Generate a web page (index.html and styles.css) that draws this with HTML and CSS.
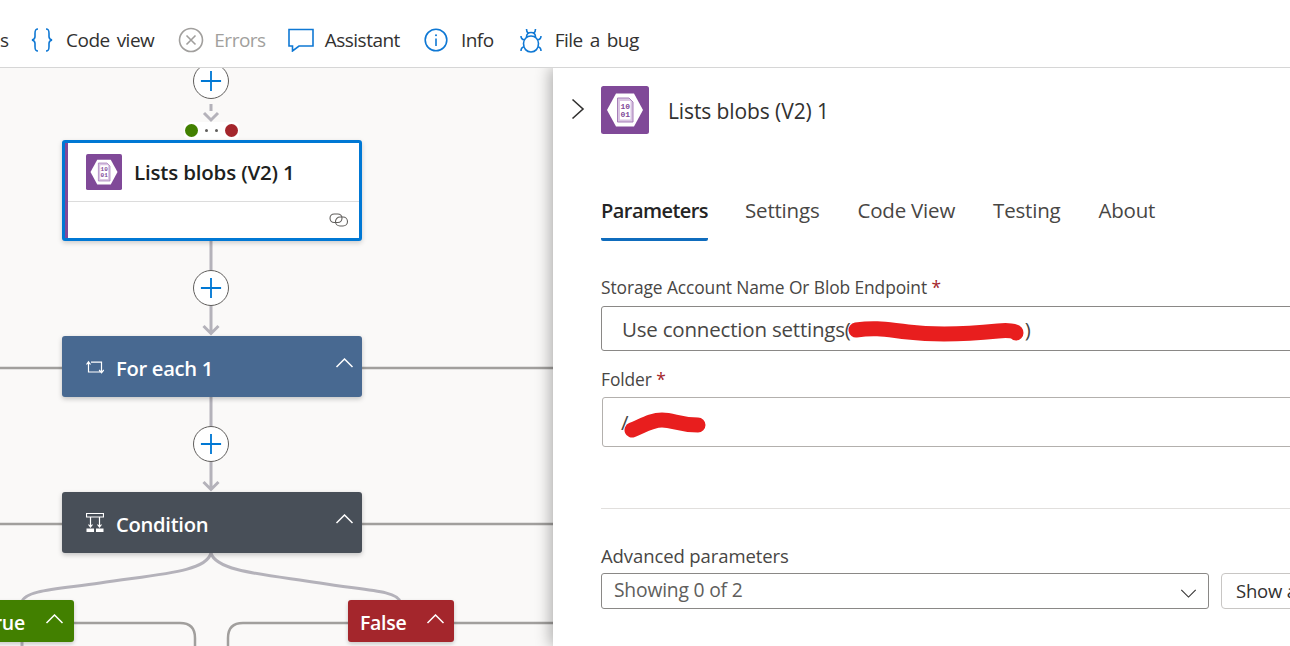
FILE: index.html
```html
<!DOCTYPE html>
<html lang="en">
<head>
<meta charset="utf-8">
<title>Designer</title>
<link rel="stylesheet" href="styles.css">
</head>
<body>
<header class="toolbar">
  <span class="tool-cut">s</span>
  <div class="tool tool-code">
    <svg class="ic ic-braces" viewBox="0 0 22 24"><path d="M7 1C4 1 4 3 4 5.500V8.500C4 10.500 3 11.500 1 12C3 12.500 4 13.500 4 15.500V18.500C4 21 4 23 7 23M15 1C18 1 18 3 18 5.500V8.500C18 10.500 19 11.500 21 12C19 12.500 18 13.500 18 15.500V18.500C18 21 18 23 15 23"/></svg>
    <span>Code view</span>
  </div>
  <div class="tool tool-err">
    <svg class="ic ic-err" viewBox="0 0 26 26"><circle cx="13" cy="13" r="11.500"/><path d="M8.500 8.500L17.500 17.500M17.500 8.500L8.500 17.500"/></svg>
    <span>Errors</span>
  </div>
  <div class="tool tool-chat">
    <svg class="ic ic-chat" viewBox="0 0 26 24"><path d="M1 1.500H25V18H11L4.500 23V18H1Z"/></svg>
    <span>Assistant</span>
  </div>
  <div class="tool tool-info">
    <svg class="ic ic-info" viewBox="0 0 24 24"><circle cx="12" cy="12" r="10.800"/><path d="M12 10.500V18"/><circle class="dot" cx="12" cy="7.300" r="1"/></svg>
    <span>Info</span>
  </div>
  <div class="tool tool-bug">
    <svg class="ic ic-bug" viewBox="0 0 22 25"><path d="M6.500 1C6.500 3 7 4 8 5M15.500 1C15.500 3 15 4 14 5M6.500 9C6.500 6 8.500 4.500 11 4.500C13.500 4.500 15.500 6 15.500 9M11 8C15.500 8 18.500 11.500 18.500 15.500C18.500 20.500 15.500 24 11 24C6.500 24 3.500 20.500 3.500 15.500C3.500 11.500 6.500 8 11 8ZM1 8C1 10 2 11.500 4.500 12M21 8C21 10 20 11.500 17.500 12M1 23C1 20.500 2 19 4.500 18.500M21 23C21 20.500 20 19 17.500 18.500"/></svg>
    <span>File a bug</span>
  </div>
</header>

<main class="workspace">
  <section class="canvas">
    <svg class="wires" viewBox="0 68 553 578">
      <g class="rail">
        <path d="M0 368H62M362 368H553M0 524H62M362 524H553M74 623H180Q195 623 195 638V646M454 623H553M348 623H243Q228 623 228 638V646"/>
      </g>
      <g class="wire">
        <path class="dash" d="M211 104V111"/>
        <path d="M204 113L211 120L218 113"/>
        <path d="M211 241V272M211 305V334M203.500 326L211 333.500L218.500 326"/>
        <path d="M211 397V428M211 461V490M203.500 482L211 489.500L218.500 482"/>
        <path d="M211 553C206 572 160 574 100 583C60 589 24 590 22 602M211 553C216 572 270 575 320 583C360 590 398 590 400 602M22 642V646"/>
      </g>
    </svg>

    <button class="plus plus-a" aria-label="Add"><svg viewBox="0 0 24 24"><path d="M12 1V23M1 12H23"/></svg></button>
    <button class="plus plus-b" aria-label="Add"><svg viewBox="0 0 24 24"><path d="M12 1V23M1 12H23"/></svg></button>
    <button class="plus plus-c" aria-label="Add"><svg viewBox="0 0 24 24"><path d="M12 1V23M1 12H23"/></svg></button>

    <div class="run-after">
      <i class="ra-dot ra-green"></i><i class="ra-pip"></i><i class="ra-pip"></i><i class="ra-dot ra-red"></i>
    </div>

    <article class="card">
      <div class="card-head">
        <svg class="blob blob-sm" viewBox="0 0 48 48"><use href="#blob"/></svg>
        <span class="card-title">Lists blobs (V2) 1</span>
      </div>
      <div class="card-foot">
        <svg class="link" viewBox="0 0 20 14"><rect x="1" y="1" width="12" height="8.500" rx="4.200"/><rect x="6.500" y="4" width="12" height="9" rx="4.500"/></svg>
      </div>
    </article>

    <div class="scope scope-each">
      <svg class="scope-ic" viewBox="0 0 18 14"><path d="M2.500 2V12H15M5 2.200H15.500V11.500M0.500 4.500L2.500 1.800L4.500 4.500M13.200 10L15.500 12.800L17.800 10"/></svg>
      <span class="scope-title">For each 1</span>
      <svg class="caret" viewBox="0 0 18 10"><path d="M1 9L9 1L17 9"/></svg>
    </div>

    <div class="scope scope-cond">
      <svg class="scope-ic" viewBox="0 0 18 20"><path d="M0.500 0.500H17.500V4H0.500ZM4.500 4V14M13.500 4V14M2.500 11.500L4.500 14L6.500 11.500M11.500 11.500L13.500 14L15.500 11.500"/><path class="fill" d="M0.500 15.500H8V19H0.500ZM10 15.500H17.500V19H10Z"/></svg>
      <span class="scope-title">Condition</span>
      <svg class="caret" viewBox="0 0 18 10"><path d="M1 9L9 1L17 9"/></svg>
    </div>

    <div class="branch branch-true">
      <span class="scope-title">True</span>
      <svg class="caret" viewBox="0 0 18 10"><path d="M1 9L9 1L17 9"/></svg>
    </div>
    <div class="branch branch-false">
      <span class="scope-title">False</span>
      <svg class="caret" viewBox="0 0 18 10"><path d="M1 9L9 1L17 9"/></svg>
    </div>
  </section>

  <aside class="panel">
    <div class="panel-head">
      <svg class="panel-toggle" viewBox="0 0 14 22"><path d="M1.500 1.500L12 11L1.500 20.500"/></svg>
      <svg class="blob blob-lg" viewBox="0 0 48 48">
        <defs>
          <g id="blob">
            <rect width="48" height="48" rx="2.500" fill="#804998"/>
            <path d="M15 7.500H33L42 24L33 40.500H15L6 24Z" fill="#fff"/>
            <path d="M16.500 12H28L32 16V36H16.500Z" fill="#d9c4e2" stroke="#a77fb9"/>
            <rect x="19" y="15" width="10.500" height="18.500" fill="#fff"/>
            <text x="24.200" y="22.500" class="bits">10</text>
            <text x="24.200" y="31" class="bits">01</text>
          </g>
        </defs>
        <use href="#blob"/>
      </svg>
      <h2 class="panel-title">Lists blobs (V2) 1</h2>
    </div>

    <nav class="tabs">
      <a class="tab tab-on">Parameters</a>
      <a class="tab">Settings</a>
      <a class="tab">Code View</a>
      <a class="tab">Testing</a>
      <a class="tab">About</a>
    </nav>

    <div class="form">
      <label class="lbl">Storage Account Name Or Blob Endpoint <em>*</em></label>
      <div class="field field-account">
        <span>Use connection settings(<i class="redacted"></i>)</span>
        <svg class="scribble scribble-a" viewBox="0 0 180 26"><path d="M8 12C30 9 40 12 60 14C85 17 120 16 150 13C160 12 168 13 168 15"/></svg>
      </div>
      <label class="lbl lbl-folder">Folder <em>*</em></label>
      <div class="field field-folder">
        <span>/</span>
        <svg class="scribble scribble-b" viewBox="0 0 84 26"><path d="M10 18C22 13 30 8 40 8C52 8 56 13 76 13"/></svg>
      </div>
      <hr class="rule">
      <label class="lbl lbl-adv">Advanced parameters</label>
      <div class="adv-row">
        <div class="dropdown">
          <span>Showing 0 of 2</span>
          <svg class="dd-caret" viewBox="0 0 18 10"><path d="M1 1L9 9L17 1"/></svg>
        </div>
        <button class="show-all">Show all</button>
      </div>
    </div>
  </aside>
</main>
</body>
</html>
```

FILE: styles.css
```css
* { box-sizing: border-box; }

html, body {
  margin: 0;
  height: 646px;
  overflow: hidden;
  background: #fff;
  font-family: "Open Sans", "Liberation Sans", sans-serif;
  color: #323130;
}

/* toolbar */
.toolbar {
  height: 68px;
  padding-top: 13px;
  display: flex;
  align-items: center;
  border-bottom: 1px solid #d6d6d6;
  font-size: 19px;
  letter-spacing: -0.5px;
  word-spacing: 2.5px;
  white-space: nowrap;
  overflow: hidden;
}
.tool-cut { width: 31px; }
.tool { display: flex; align-items: center; margin-right: 23px; }
.tool-err { color: #a19f9d; margin-right: 22px; }
.tool-err .ic { margin-left: 1px; }
.tool-chat { margin-right: 24px; }
.tool-info { margin-right: 26px; }
.ic { display: block; fill: none; stroke: #0f78d4; stroke-width: 1.6; }
.ic-braces { width: 22px; height: 24px; margin-right: 13px; }
.ic-err { width: 26px; height: 26px; margin-right: 10px; stroke: #a19f9d; }
.ic-chat { width: 26px; height: 24px; margin-right: 11px; }
.ic-info { width: 24px; height: 24px; margin-right: 13px; }
.ic-info .dot { fill: #0f78d4; stroke: none; }
.ic-bug { width: 22px; height: 25px; margin-right: 13px; }

/* workspace */
.workspace {
  display: flex;
  height: 578px;
  overflow: hidden;
}

/* canvas */
.canvas {
  position: relative;
  width: 553px;
  height: 578px;
  flex: none;
  overflow: hidden;
  background: #faf9f8;
}
.wires {
  position: absolute;
  inset: 0;
  width: 553px;
  height: 578px;
  fill: none;
}
.rail path { stroke: #a19f9d; stroke-width: 2.500; }
.wire path { stroke: #b4b2ba; stroke-width: 3; }

.plus {
  position: absolute;
  left: 193px;
  width: 36px;
  height: 36px;
  padding: 0;
  border: 1px solid #605e5c;
  border-radius: 50%;
  background: #fff;
  display: flex;
  align-items: center;
  justify-content: center;
}
.plus svg { width: 22px; height: 22px; fill: none; stroke: #0078d4; stroke-width: 2; }
.plus-a { top: -5px; }
.plus-b { top: 202px; }
.plus-c { top: 358px; }

.run-after {
  position: absolute;
  left: 184px;
  top: 54px;
  width: 55px;
  height: 17px;
  border-radius: 4px;
  background: #fff;
  display: flex;
  align-items: center;
  justify-content: space-between;
  padding: 0 1px;
}
.ra-dot { width: 13px; height: 13px; border-radius: 50%; }
.ra-green { background: #428000; }
.ra-red { background: #a4262c; }
.ra-pip { width: 3px; height: 3px; border-radius: 50%; background: #605e5c; }

.card {
  position: absolute;
  left: 62px;
  top: 72px;
  width: 300px;
  height: 101px;
  background: #fff;
  border: 3px solid #0078d4;
  border-radius: 3px;
  box-shadow: 0 2px 5px rgba(0, 0, 0, .18);
  display: flex;
  flex-direction: column;
}
.card::before {
  content: "";
  position: absolute;
  left: 0;
  top: 0;
  bottom: 0;
  width: 3px;
  background: #804998;
}
.card-head {
  height: 59px;
  flex: none;
  display: flex;
  align-items: center;
  padding: 0 0 0 21px;
  gap: 12px;
  border-bottom: 1px solid #dcdcdc;
}
.blob { display: block; flex: none; }
.blob-sm { width: 36px; height: 36px; }
.blob-lg { width: 48px; height: 48px; }
.bits { font: 700 8px "Liberation Mono", monospace; fill: #804998; text-anchor: middle; }
.card-title {
  font-size: 20.500px;
  font-weight: 600;
  color: #201f1e;
  letter-spacing: -0.18px;
  white-space: nowrap;
}
.card-foot {
  flex: 1;
  display: flex;
  justify-content: flex-end;
  align-items: center;
  padding-right: 10px;
}
.link { width: 20px; height: 14px; fill: none; stroke: #605e5c; stroke-width: 1.100; }

.scope {
  position: absolute;
  left: 62px;
  width: 300px;
  height: 61px;
  border-radius: 3px;
  box-shadow: 0 2px 5px rgba(0, 0, 0, .22);
  color: #fff;
  display: flex;
  align-items: center;
  padding: 0 8px 0 24px;
}
.scope-each { top: 268px; background: #486991; }
.scope-cond { top: 424px; background: #484f58; }
.scope-ic { width: 18px; flex: none; fill: none; stroke: #fff; stroke-width: 1.200; margin-right: 12px; }
.scope-ic .fill { fill: #fff; stroke: none; }
.scope-each .scope-ic { height: 14px; }
.scope-cond .scope-ic { height: 20px; }
.scope-title {
  flex: 1;
  padding-top: 2px;
  font-size: 20.200px;
  font-weight: 600;
  letter-spacing: -0.3px;
  color: #fff;
  white-space: nowrap;
}
.caret { width: 19px; height: 10px; flex: none; fill: none; stroke: #fff; stroke-width: 1.500; margin-bottom: 8px; }

.branch {
  position: absolute;
  top: 532px;
  height: 42px;
  border-radius: 3px;
  box-shadow: 0 2px 4px rgba(0, 0, 0, .2);
  display: flex;
  align-items: center;
}
.branch .scope-title { font-size: 19.500px; padding-top: 3px; }
.branch-true { left: -23px; width: 97px; padding: 0 10px 0 6px; background: #428000; }
.branch-false { left: 348px; width: 106px; padding: 0 9px 0 12px; background: #a4262c; }
.branch .caret { margin-bottom: 4px; }

/* panel */
.panel {
  position: relative;
  flex: 1;
  min-width: 0;
  background: #fff;
  box-shadow: -3px 0 14px rgba(0, 0, 0, .3);
  padding-top: 18px;
  clip-path: inset(0 0 0 -30px);
}

.panel-head {
  display: flex;
  align-items: center;
  height: 48px;
  padding-left: 18px;
}
.panel-toggle { width: 14px; height: 22px; flex: none; fill: none; stroke: #323130; stroke-width: 1.600; margin-right: 16px; margin-bottom: 2px; }
.panel-title {
  margin: 2px 0 0 19px;
  font-size: 21px;
  font-weight: 500;
  letter-spacing: -0.1px;
  color: #323130;
  white-space: nowrap;
}

.tabs {
  display: flex;
  gap: 38px;
  margin: 54px 0 0 48px;
  height: 53px;
  font-size: 20.500px;
  letter-spacing: -0.2px;
  color: #484644;
}
.tab { display: block; height: 53px; line-height: 30px; padding-top: 7px; white-space: nowrap; }
.tab-on {
  margin-right: -1px;
  padding-top: 8px;
  color: #242424;
  font-size: 20px;
  font-weight: 600;
  letter-spacing: -0.55px;
  border-bottom: 3px solid #0f6cbd;
  border-radius: 0 0 2px 2px;
}

.form { margin: 34px 0 0 48px; width: 800px; }
.lbl { display: block; font-size: 17.400px; line-height: 24px; letter-spacing: -0.1px; color: #484644; white-space: nowrap; }
.lbl em { color: #a4262c; font-style: normal; }
.field {
  position: relative;
  display: flex;
  align-items: center;
  border: 1px solid #8a8886;
  border-radius: 3px;
  padding-left: 20px;
  font-size: 20.500px;
  letter-spacing: -0.2px;
  color: #484644;
  white-space: nowrap;
  overflow: hidden;
}
.redacted { display: inline-block; width: 174px; }
.field-account { height: 45px; margin-top: 7px; }
.field-folder { height: 50px; margin: 6px 0 0 1px; padding-left: 18px; border-color: #b3b0ad; }
.lbl-folder { margin-top: 16px; }
.scribble { position: absolute; fill: none; stroke: #e81e1e; stroke-linecap: round; }
.scribble-a { left: 246px; top: 11px; width: 180px; height: 26px; stroke-width: 15; }
.scribble-b { left: 19px; top: 14px; width: 84px; height: 26px; stroke-width: 15; }

.rule { margin: 61px 0 0; border: 0; border-top: 1px solid #e1dfdd; }
.lbl-adv { margin-top: 35px; font-size: 18.500px; }
.adv-row { display: flex; gap: 12px; margin-top: 5px; }
.dropdown {
  flex: none;
  width: 608px;
  height: 36px;
  display: flex;
  align-items: center;
  justify-content: space-between;
  padding: 0 11px 4px 12px;
  border: 1px solid #8a8886;
  border-radius: 3px;
  font-size: 19.300px;
  letter-spacing: -0.2px;
  color: #605e5c;
}
.dd-caret { width: 17px; height: 9px; fill: none; stroke: #323130; stroke-width: 1.200; margin-top: 8px; }
.show-all {
  flex: none;
  height: 36px;
  width: 120px;
  padding: 0 0 2px 14px;
  text-align: left;
  border: 1px solid #c8c6c4;
  border-radius: 4px;
  background: #fff;
  font: 18.500px "Open Sans", sans-serif;
  letter-spacing: -0.2px;
  color: #323130;
}
```
